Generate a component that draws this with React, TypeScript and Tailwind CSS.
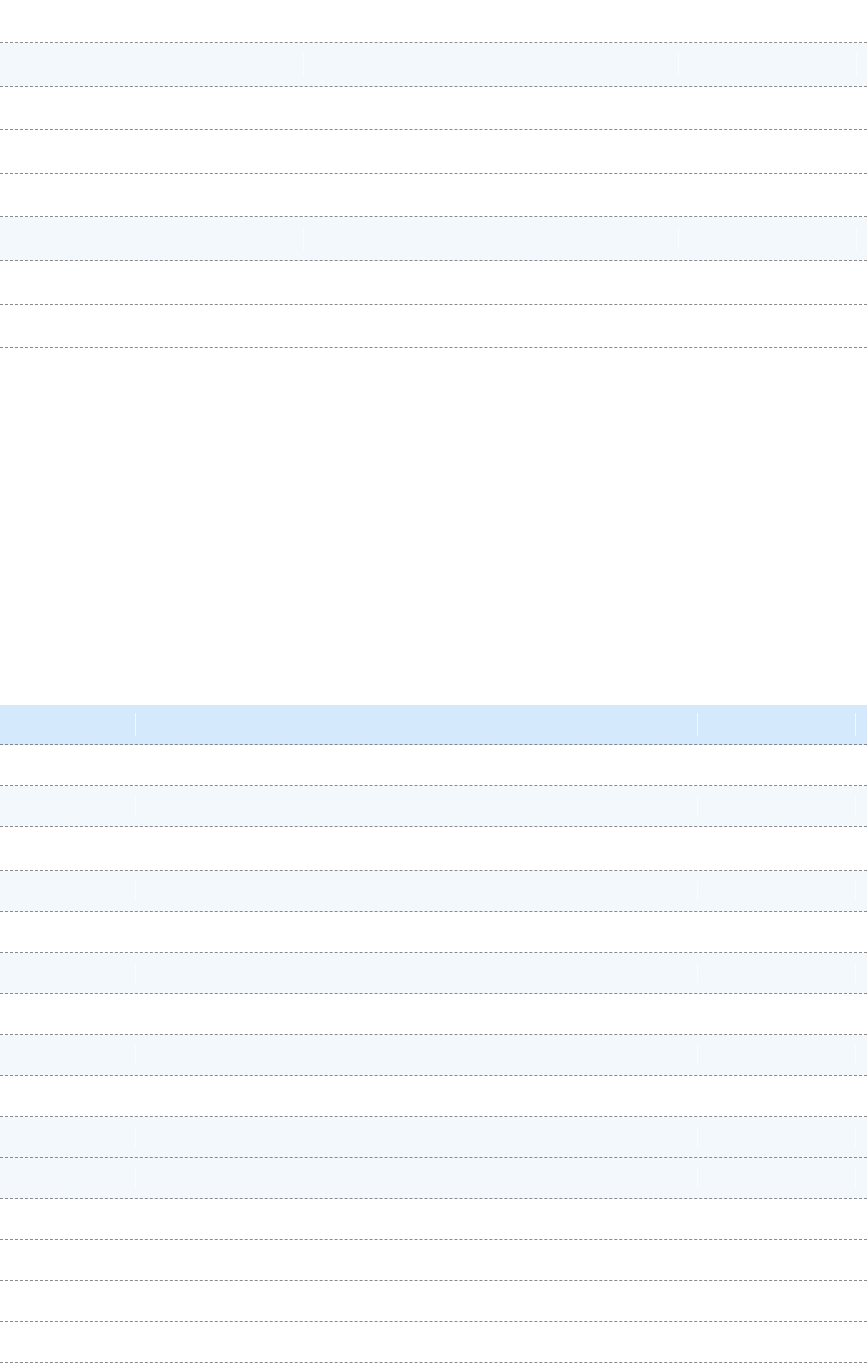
const topRows = [
  { h: "h-[44px]", bg: "bg-[#f3f8fd]" },
  { h: "h-[43px]", bg: "bg-white" },
  { h: "h-[44px]", bg: "bg-white" },
  { h: "h-[43px]", bg: "bg-white" },
  { h: "h-[44px]", bg: "bg-[#f3f8fd]" },
  { h: "h-[44px]", bg: "bg-white" },
  { h: "h-[43px]", bg: "bg-white" },
];

const listRows = [
  { h: "h-[41px]", bg: "bg-white" },
  { h: "h-[41px]", bg: "bg-[#f3f8fd]" },
  { h: "h-[44px]", bg: "bg-white" },
  { h: "h-[41px]", bg: "bg-[#f3f8fd]" },
  { h: "h-[41px]", bg: "bg-white" },
  { h: "h-[41px]", bg: "bg-[#f3f8fd]" },
  { h: "h-[41px]", bg: "bg-white" },
  { h: "h-[41px]", bg: "bg-[#f3f8fd]" },
  { h: "h-[41px]", bg: "bg-white" },
  { h: "h-[41px]", bg: "bg-[#f3f8fd]" },
  { h: "h-[41px]", bg: "bg-[#f3f8fd]" },
  { h: "h-[41px]", bg: "bg-white" },
  { h: "h-[41px]", bg: "bg-white" },
  { h: "h-[41px]", bg: "bg-white" },
  { h: "h-[41px]", bg: "bg-white" },
];

export default function App() {
  return (
    <div className="min-h-screen w-[867px] bg-white font-['Liberation_Sans',sans-serif] text-[13px] text-white">
      {/* Detail table */}
      <div className="mt-[42px] border-t border-dashed border-[#8f8f8f]">
        {topRows.map((r, i) => (
          <div
            key={i}
            className={`grid grid-cols-[303px_375px_178px_1fr] border-b border-dashed border-[#8a8a8a] ${r.h} ${r.bg}`}
          >
            <div className="my-[10px]" />
            <div className="my-[10px] border-l border-white/60" />
            <div className="my-[10px] border-l border-white/60" />
            <div className="my-[10px] border-l border-white/60" />
          </div>
        ))}
      </div>

      {/* List table */}
      <div className="mt-[357px]">
        <div className="grid h-[40px] grid-cols-[135px_562px_158px_1fr] border-b border-dashed border-[#858585] bg-[#d4e9fc]">
          <div className="my-2" />
          <div className="my-2 border-l border-white/70" />
          <div className="my-2 border-l border-white/70" />
          <div className="my-2 border-l border-white/70" />
        </div>
        {listRows.map((r, i) => (
          <div
            key={i}
            className={`grid grid-cols-[135px_562px_158px_1fr] border-b border-dashed border-[#8a8a8a] ${r.h} ${r.bg}`}
          >
            <div className="my-[10px]" />
            <div className="my-[10px] border-l border-white/60" />
            <div className="my-[10px] border-l border-white/60" />
            <div className="my-[10px] border-l border-white/60" />
          </div>
        ))}
      </div>
    </div>
  );
}
